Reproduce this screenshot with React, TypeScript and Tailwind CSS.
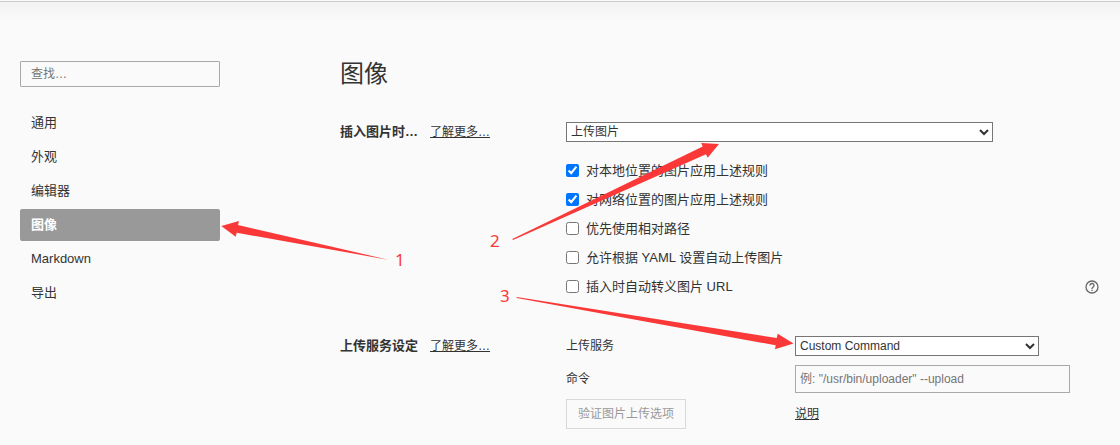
import type { ReactNode } from 'react';

const NAV_ITEMS = ['通用', '外观', '编辑器', '图像', 'Markdown', '导出'];

const IMAGE_RULES = [
  { id: 'local', label: '对本地位置的图片应用上述规则', checked: true },
  { id: 'network', label: '对网络位置的图片应用上述规则', checked: true },
  { id: 'relative', label: '优先使用相对路径', checked: false },
  { id: 'yaml', label: '允许根据 YAML 设置自动上传图片', checked: false },
  { id: 'escape', label: '插入时自动转义图片 URL', checked: false },
];

function Sidebar() {
  return (
    <aside className="w-[200px] shrink-0 pt-[61px]">
      <input
        type="search"
        aria-label="查找"
        placeholder="查找…"
        className="block w-full h-[26px] px-2.5 border border-[#a9a9a9] rounded-[1px] text-xs placeholder:text-[#757575]"
      />
      <nav className="mt-5 flex flex-col gap-0.5">
        {NAV_ITEMS.map((item) => (
          <a
            key={item}
            href="#"
            className={
              item === '图像'
                ? 'h-8 px-[11px] leading-8 rounded-[2px] bg-[#999999] text-white font-bold'
                : 'h-8 px-[11px] leading-8 rounded-[2px]'
            }
          >
            {item}
          </a>
        ))}
      </nav>
    </aside>
  );
}

function Section({ title, children }: { title: string; children: ReactNode }) {
  return (
    <section className="flex">
      <div className="w-[226px] shrink-0 flex gap-3 leading-5">
        <h2 className="font-bold">{title}</h2>
        <a href="#" className="text-xs leading-5 underline">
          了解更多…
        </a>
      </div>
      <div className="flex-1 min-w-0">{children}</div>
    </section>
  );
}

function HelpIcon() {
  return (
    <svg viewBox="0 0 14 14" className="size-3.5" fill="none" stroke="#666666" strokeWidth="1.3">
      <circle cx="7" cy="7" r="6" />
      <path d="M5 5.6a2 2 0 1 1 3.2 1.5C7.4 7.7 7 8 7 8.9" />
      <path d="M7 9.7v1.3" />
    </svg>
  );
}

/* Numbered step arrows laid over the settings page */
function StepArrows() {
  return (
    <svg
      width="1120"
      height="445"
      className="absolute top-0 left-0 pointer-events-none font-['Noto_Sans',sans-serif] text-[17px]"
      fill="#fb3838"
    >
      <path d="M221.3 226 239 221 238 225 389 259.9 236.7 232.7 235.7 236.7Z" />
      <path d="M719 144 701.3 143 702.7 146.5 512.3 239 513 240 706 154.3 707.7 157.7Z" />
      <path d="M793.5 343.5 777.7 333.7 776.7 338 516.7 297 516.7 298 775.7 345.3 775 349.2Z" />
      <text x="395" y="266">1</text>
      <text x="490" y="247">2</text>
      <text x="500" y="302">3</text>
    </svg>
  );
}

export default function App() {
  return (
    <div
      lang="zh-CN"
      className="relative min-h-screen overflow-hidden bg-[#fafafa] text-[#333333] text-[13px] font-['Liberation_Sans','Noto_Sans_CJK_SC',sans-serif]"
    >
      {/* Window edge shadow */}
      <div className="absolute inset-x-0 top-px h-5 border-t border-[#cccccc] bg-linear-to-b from-[#f2f2f2] to-[#fafafa]" />

      <div className="relative flex gap-[120px] pl-5 pr-[21px] pb-4">
        <Sidebar />

        <main className="flex-1 min-w-0 pt-14">
          <h1 className="text-2xl leading-9 mb-[30px]">图像</h1>

          <div className="flex flex-col gap-[35px]">
            <Section title="插入图片时…">
              <select
                aria-label="插入图片时"
                className="block w-[427px] h-5 mb-3.5 border border-[#767676] bg-white text-xs"
              >
                <option>上传图片</option>
              </select>
              {IMAGE_RULES.map((rule) => (
                <div key={rule.id} className="flex items-center h-[29px]">
                  <input
                    id={rule.id}
                    type="checkbox"
                    defaultChecked={rule.checked}
                    className="size-[13px] mr-[7px]"
                  />
                  <label htmlFor={rule.id}>{rule.label}</label>
                  {rule.id === 'escape' && (
                    <button type="button" aria-label="帮助" className="ml-auto">
                      <HelpIcon />
                    </button>
                  )}
                </div>
              ))}
            </Section>

            <Section title="上传服务设定">
              <div className="grid grid-cols-[229px_1fr] items-center text-xs">
                <label htmlFor="service">上传服务</label>
                <select
                  id="service"
                  className="w-[244px] h-5 border border-[#767676] bg-white text-xs"
                >
                  <option>Custom Command</option>
                </select>

                <label htmlFor="command" className="mt-2">
                  命令
                </label>
                <input
                  id="command"
                  type="text"
                  placeholder={'例: "/usr/bin/uploader" --upload'}
                  className="w-[275px] h-7 mt-[9px] px-1 border border-[#a9a9a9] text-xs placeholder:text-[#757575]"
                />

                <button
                  type="button"
                  disabled
                  className="w-[120px] h-[30px] mt-1.5 border border-[#d9d9d9] text-[#999999]"
                >
                  验证图片上传选项
                </button>
                <a href="#" className="mt-1.5 justify-self-start underline">
                  说明
                </a>
              </div>
            </Section>
          </div>
        </main>
      </div>

      <StepArrows />
    </div>
  );
}
